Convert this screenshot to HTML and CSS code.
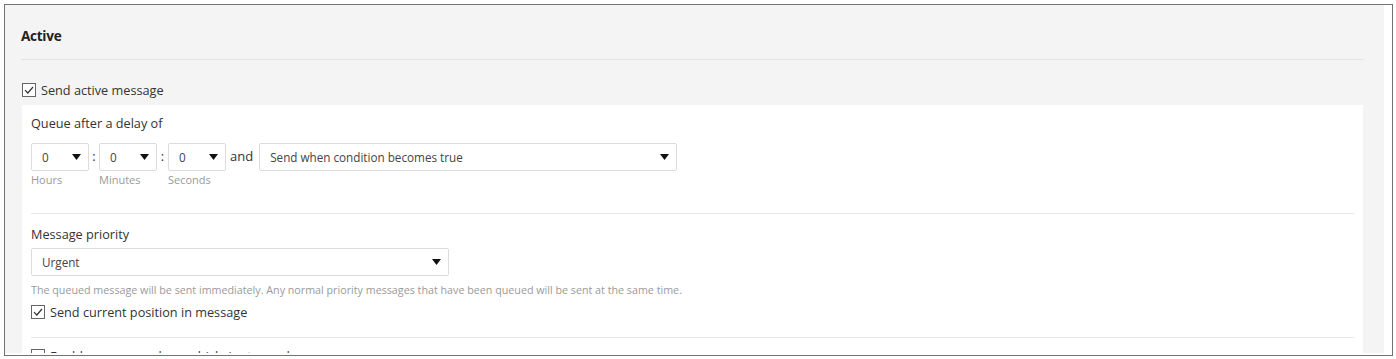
FILE: index.html
```html
<!DOCTYPE html>
<html>
<head>
<meta charset="utf-8">
<link rel="stylesheet" href="styles.css">
</head>
<body>
<div class="frame">
  <div class="panel">
    <h2 class="heading">Active</h2>
    <div class="rule"></div>
    <label class="check-row">
      <svg class="checkbox" width="14" height="14" viewBox="0 0 14 14"><rect x="0.5" y="0.5" width="13" height="13" fill="#fff" stroke="#666"/><path d="M3 7.2 L5.8 10 L11 4" fill="none" stroke="#333" stroke-width="1.2"/></svg>
      <span>Send active message</span>
    </label>
    <div class="card">
      <div class="field-label">Queue after a delay of</div>
      <div class="delay-row">
        <div class="unit">
          <div class="select small"><span>0</span><svg class="arrow" width="9" height="6" viewBox="0 0 9 6"><path d="M0 0 H9 L4.5 6 Z" fill="#111"/></svg></div>
          <div class="hint">Hours</div>
        </div>
        <span class="colon">:</span>
        <div class="unit">
          <div class="select small"><span>0</span><svg class="arrow" width="9" height="6" viewBox="0 0 9 6"><path d="M0 0 H9 L4.5 6 Z" fill="#111"/></svg></div>
          <div class="hint">Minutes</div>
        </div>
        <span class="colon">:</span>
        <div class="unit">
          <div class="select small"><span>0</span><svg class="arrow" width="9" height="6" viewBox="0 0 9 6"><path d="M0 0 H9 L4.5 6 Z" fill="#111"/></svg></div>
          <div class="hint">Seconds</div>
        </div>
        <span class="and">and</span>
        <div class="select wide"><span>Send when condition becomes true</span><svg class="arrow" width="9" height="6" viewBox="0 0 9 6"><path d="M0 0 H9 L4.5 6 Z" fill="#111"/></svg></div>
      </div>
      <div class="rule inner first"></div>
      <div class="field-label">Message priority</div>
      <div class="select wide priority"><span>Urgent</span><svg class="arrow" width="9" height="6" viewBox="0 0 9 6"><path d="M0 0 H9 L4.5 6 Z" fill="#111"/></svg></div>
      <div class="help">The queued message will be sent immediately. Any normal priority messages that have been queued will be sent at the same time.</div>
      <label class="check-row sub">
        <svg class="checkbox" width="14" height="14" viewBox="0 0 14 14"><rect x="0.5" y="0.5" width="13" height="13" fill="#fff" stroke="#666"/><path d="M3 7.2 L5.8 10 L11 4" fill="none" stroke="#333" stroke-width="1.2"/></svg>
        <span>Send current position in message</span>
      </label>
      <div class="rule inner second"></div>
      <label class="check-row sub last">
        <svg class="checkbox" width="14" height="14" viewBox="0 0 14 14"><rect x="0.5" y="0.5" width="13" height="13" fill="#fff" stroke="#666"/></svg>
        <span>Enable message when vehicle is stopped</span>
      </label>
    </div>
  </div>
</div>
</body>
</html>
```

FILE: styles.css
```css
* { box-sizing: border-box; }
html, body { margin: 0; padding: 0; background: #fff; }
body {
  font-family: "Open Sans", "Liberation Sans", sans-serif;
  color: #333;
  font-size: 12.7px;
}
.frame {
  margin: 4px;
  width: 1389px;
  height: 352px;
  border: 1px solid #737373;
  padding: 0 8px 2px 0;
  overflow: hidden;
  background: #fff;
}
.panel {
  background: #f4f4f4;
  height: 100%;
  padding: 21px 20px 0 16px;
  overflow: hidden;
}
.heading {
  margin: 0 0 13px 0;
  font-size: 13.6px;
  line-height: 20px;
  font-weight: 700;
  color: #222;
  letter-spacing: -0.3px;
}
.rule {
  height: 1px;
  background: #e4e4e4;
}
.check-row {
  display: flex;
  align-items: center;
  gap: 5px;
  height: 18px;
  margin-top: 21px;
  padding-left: 1px;
  line-height: 18px;
  font-size: 12.7px;
  color: #333;
}
.checkbox { flex: none; }
.card {
  background: #fff;
  margin: 6px 1px 0 1px;
  padding: 9px 9px 20px 9px;
}
.field-label {
  line-height: 18px;
  font-size: 12.7px;
  color: #333;
}
.delay-row {
  display: flex;
  align-items: flex-start;
  margin-top: 11px;
}
.unit { display: flex; flex-direction: column; }
.select {
  display: flex;
  align-items: center;
  justify-content: space-between;
  height: 28px;
  border: 1px solid #dcdcdc;
  border-radius: 2px;
  background: #fff;
  padding: 0 7px 0 10px;
  font-size: 11.7px;
  color: #444;
}
.select.small { width: 58px; }
.select.wide { width: 418px; }
.colon {
  width: 10px;
  text-align: center;
  line-height: 26px;
  font-size: 13px;
  color: #333;
}
.colon + .unit + .colon { width: 11px; }
.and {
  margin: 0 6px 0 4px;
  line-height: 26px;
  font-size: 13px;
  color: #333;
}
.hint {
  margin-top: 2px;
  line-height: 14px;
  font-size: 11px;
  color: #9a9a9a;
}
.rule.inner { background: #e8e8e8; }
.rule.first { margin-top: 26px; margin-bottom: 11px; }
.priority { margin-top: 5px; }
.help {
  margin-top: 7px;
  line-height: 14px;
  font-size: 10.73px;
  color: #9a9a9a;
}
.check-row.sub { margin-top: 6px; padding-left: 0; }
.rule.second { margin-top: 16px; }
.check-row.last { margin-top: 9px; }
```
